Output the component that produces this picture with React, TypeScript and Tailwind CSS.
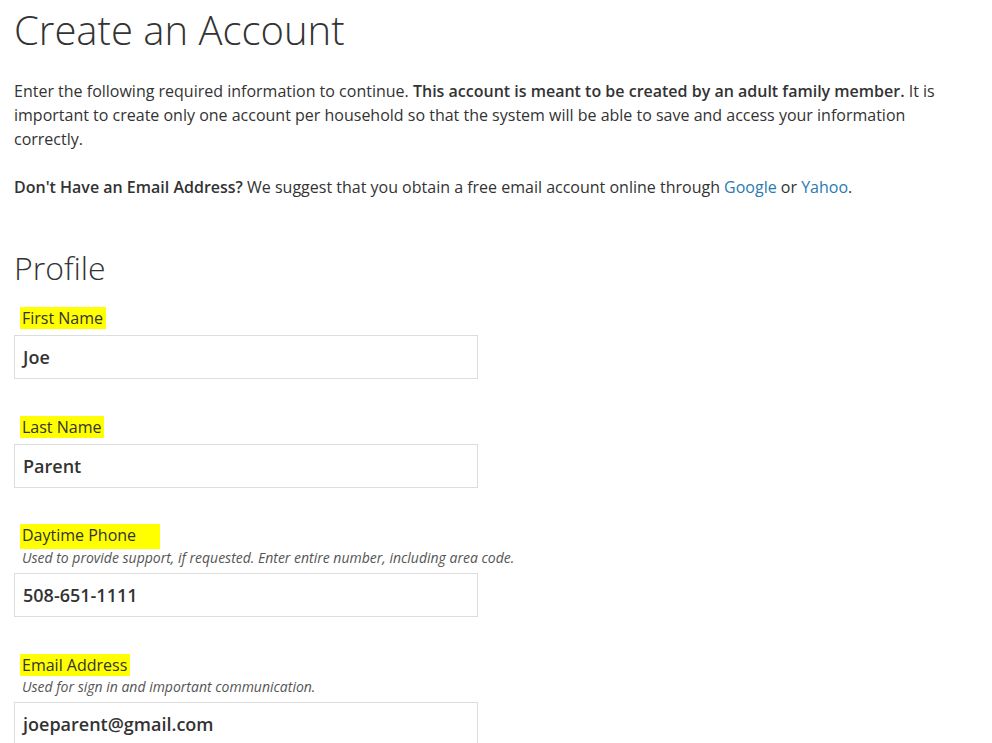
export default function App() {
  const f = { fontFamily: '"Open Sans", sans-serif' };
  const Label = ({ t, extra = "" }: { t: string; extra?: string }) => (
    <div className="h-[24px] flex items-center pl-[6px]">
      <span className={`bg-[#ffff00] pl-[2px] pr-[3px] leading-[22px] text-[16px] text-[#333] ${extra}`}>{t}</span>
    </div>
  );
  const Input = ({ v }: { v: string }) => (
    <div className="w-[464px] h-[44px] border border-[#ddd] flex items-center pl-[8px] text-[18px] font-semibold text-[#333]">{v}</div>
  );
  const Help = ({ t }: { t: string }) => <div className="pl-[8px] text-[14px] italic text-[#555] leading-[22px] h-[20px] -mt-[1px]">{t}</div>;
  return (
    <div style={f} className="bg-white w-[992px] h-[743px] overflow-hidden px-[14px] text-[#333]">
      <h1 className="text-[40px] font-light leading-[48px] pt-[6px] text-[#333]">Create an Account</h1>
      <p className="mt-[25px] text-[16px] leading-[24px] pr-[40px]">
        Enter the following required information to continue. <b className="font-semibold">This account is meant to be created by an adult family member.</b> It is important to create only one account per household so that the system will be able to save and access your information correctly.
      </p>
      <p className="mt-[24px] text-[16px] leading-[24px]">
        <b className="font-semibold">Don't Have an Email Address?</b> We suggest that you obtain a free email account online through <span className="text-[#2a7ab0]">Google</span> or <span className="text-[#2a7ab0]">Yahoo</span>.
      </p>
      <h2 className="mt-[49px] text-[32px] font-light leading-[40px]">Profile</h2>
      <div className="mt-[18px]"><Label t="First Name" /></div>
      <div className="mt-[5px]"><Input v="Joe" /></div>
      <div className="mt-[36px]"><Label t="Last Name" /></div>
      <div className="mt-[5px]"><Input v="Parent" /></div>
      <div className="mt-[36px]"><Label t="Daytime Phone" extra="pr-[24px] pb-[3px]" /></div>
      <Help t="Used to provide support, if requested. Enter entire number, including area code." />
      <div className="mt-[6px]"><Input v="508-651-1111" /></div>
      <div className="mt-[36px]"><Label t="Email Address" extra="pr-[0px]" /></div>
      <Help t="Used for sign in and important communication." />
      <div className="mt-[6px]"><Input v="joeparent@gmail.com" /></div>
    </div>
  );
}
